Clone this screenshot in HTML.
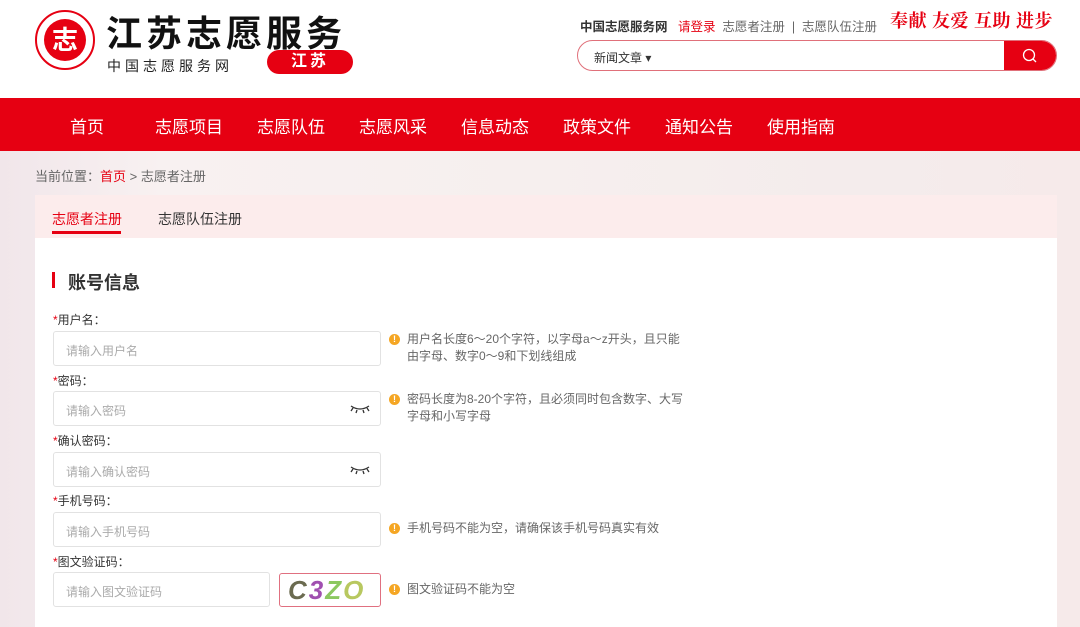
<!DOCTYPE html>
<html><head><meta charset="utf-8"><style>
*{margin:0;padding:0;box-sizing:border-box}
body{width:1080px;height:627px;overflow:hidden;font-family:"Liberation Sans","Noto Sans CJK SC",sans-serif;background:#fff;position:relative;color:#333}
.a{position:absolute}
.nav{top:98px;left:0;width:1080px;height:53px;background:#e60012}
.nav span{position:absolute;top:15px;color:#fff;font-size:17px}
.bg{top:151px;left:0;width:1080px;height:476px;background:linear-gradient(90deg,#f1e6ea 0%,#f8f1f1 15%,#f6efee 50%,#f4ecec 80%,#f6eaea 100%)}
.card{top:195px;left:35px;width:1022px;height:432px;background:#fff}
.tabs{top:195px;left:35px;width:1022px;height:43px;background:#fcecec}
.lbl{font-size:12px;color:#333;left:53px}
.lbl b{color:#e60012;font-weight:normal}
.in{left:53px;width:328px;height:35px;border:1px solid #e2e2e2;border-radius:3px;background:#fff;font-size:12px;color:#aaa;padding:10px 12px}
.tip{left:389px;font-size:12px;color:#666;line-height:17px}
.tip i{position:absolute;left:0;top:3px;width:11px;height:11px;border-radius:50%;background:#f5a623;color:#fff;font-style:normal;font-size:9px;text-align:center;line-height:11px;font-weight:bold}
.tip div{margin-left:18px}
.eye{position:absolute;right:10px;top:12px}
</style></head><body>
<div class="a" style="left:35px;top:10px;width:60px;height:60px;border-radius:50%;border:2px solid #e60012;background:#fff"></div>
<div class="a" style="left:44px;top:19px;width:42px;height:42px;border-radius:50%;background:#e60012;color:#fff;font-size:26px;font-weight:bold;text-align:center;line-height:42px">志</div>
<div class="a" style="left:106px;top:5px;font-size:36px;font-weight:bold;color:#111;letter-spacing:4px">江苏志愿服务</div>
<div class="a" style="left:107px;top:56px;font-size:14px;color:#222;letter-spacing:4px">中国志愿服务网</div>
<div class="a" style="left:267px;top:50px;width:86px;height:24px;border-radius:12px;background:#e60012;color:#fff;font-size:16px;font-weight:bold;text-align:center;line-height:24px;letter-spacing:3px">江苏</div>
<div class="a" style="left:580px;top:16px;font-size:12.5px;color:#333;white-space:nowrap"><b>中国志愿服务网</b>&nbsp;&nbsp;&nbsp;<span style="color:#e60012">请登录</span>&nbsp;&nbsp;<span style="color:#666">志愿者注册 &nbsp;| &nbsp;志愿队伍注册</span></div>
<div class="a" style="left:890px;top:7px;font-size:18px;color:#e60012;font-weight:bold;font-family:'Noto Serif CJK SC',serif;white-space:nowrap;letter-spacing:0.5px">奉献 友爱 互助 进步</div>
<div class="a" style="left:577px;top:40px;width:480px;height:31px;border:1px solid #e0707a;border-radius:16px;overflow:hidden;background:#fff">
<span class="a" style="left:16px;top:8px;font-size:12px;color:#333">新闻文章 ▾</span>
<div class="a" style="right:0;top:0;width:52px;height:31px;background:#e60012"><svg width="52" height="31"><circle cx="25" cy="14" r="5.5" fill="none" stroke="#fff" stroke-width="1.3"/><line x1="29" y1="18" x2="32" y2="21" stroke="#fff" stroke-width="1.3"/></svg></div></div>
<div class="a nav">
<span style="left:70px">首页</span><span style="left:155px">志愿项目</span><span style="left:257px">志愿队伍</span><span style="left:359px">志愿风采</span><span style="left:461px">信息动态</span><span style="left:563px">政策文件</span><span style="left:665px">通知公告</span><span style="left:767px">使用指南</span></div>
<div class="a bg"></div>
<div class="a" style="left:35px;top:166px;font-size:13px;color:#666">当前位置：<span style="color:#e60012">首页</span> &gt; 志愿者注册</div>
<div class="a card"></div>
<div class="a tabs"></div>
<div class="a" style="left:52px;top:209px;font-size:14px;color:#e60012">志愿者注册</div>
<div class="a" style="left:52px;top:231px;width:69px;height:3px;background:#e60012"></div>
<div class="a" style="left:158px;top:209px;font-size:14px;color:#333">志愿队伍注册</div>
<div class="a" style="left:52px;top:272px;width:3px;height:16px;background:#e60012"></div>
<div class="a" style="left:68px;top:269px;font-size:18px;font-weight:bold;color:#333">账号信息</div>

<div class="a lbl" style="top:311px"><b>*</b>用户名：</div>
<div class="a in" style="top:331px">请输入用户名</div>
<div class="a tip" style="top:331px"><i>!</i><div>用户名长度6～20个字符，以字母a～z开头，且只能<br>由字母、数字0～9和下划线组成</div></div>

<div class="a lbl" style="top:372px"><b>*</b>密码：</div>
<div class="a in" style="top:391px">请输入密码<svg class="eye" width="20" height="10"><path d="M1 2 Q10 8 19 2 M3 4 L1 7 M7 6 L6 9 M13 6 L14 9 M17 4 L19 7" stroke="#333" stroke-width="1.3" fill="none"/></svg></div>
<div class="a tip" style="top:391px"><i>!</i><div>密码长度为8-20个字符，且必须同时包含数字、大写<br>字母和小写字母</div></div>

<div class="a lbl" style="top:432px"><b>*</b>确认密码：</div>
<div class="a in" style="top:452px">请输入确认密码<svg class="eye" width="20" height="10"><path d="M1 2 Q10 8 19 2 M3 4 L1 7 M7 6 L6 9 M13 6 L14 9 M17 4 L19 7" stroke="#333" stroke-width="1.3" fill="none"/></svg></div>

<div class="a lbl" style="top:492px"><b>*</b>手机号码：</div>
<div class="a in" style="top:512px">请输入手机号码</div>
<div class="a tip" style="top:520px"><i>!</i><div>手机号码不能为空，请确保该手机号码真实有效</div></div>

<div class="a lbl" style="top:553px"><b>*</b>图文验证码：</div>
<div class="a in" style="top:572px;width:217px">请输入图文验证码</div>
<div class="a" style="left:279px;top:573px;width:102px;height:34px;border:1px solid #e07080;border-radius:3px;background:#fff;font-size:26px;font-weight:bold;font-style:italic;line-height:32px;padding-left:8px;letter-spacing:2px"><span style="color:#6b6b50">C</span><span style="color:#a050b0">3</span><span style="color:#8cc860">Z</span><span style="color:#b8c860">O</span></div>
<div class="a tip" style="top:581px"><i>!</i><div>图文验证码不能为空</div></div>
</body></html>
